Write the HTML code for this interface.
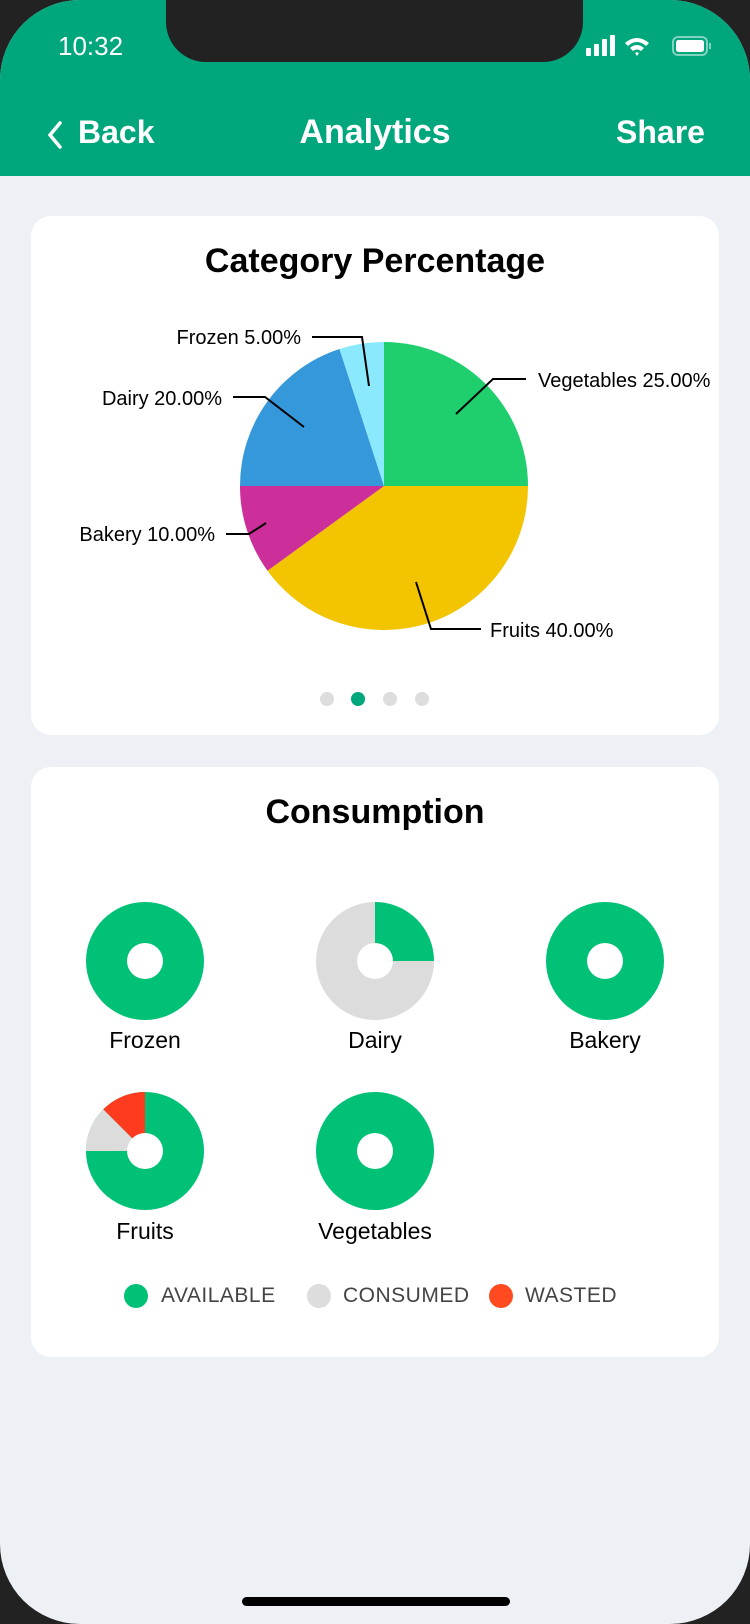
<!DOCTYPE html>
<html><head><meta charset="utf-8"><style>
*{margin:0;padding:0;box-sizing:border-box}
body{width:750px;height:1624px;background:#222;font-family:"Liberation Sans",sans-serif;overflow:hidden;position:relative}
.screen{position:absolute;left:0;top:0;width:750px;height:1624px;background:#edf0f5;border-radius:80px 80px 80px 80px;overflow:hidden}
.hdr{position:absolute;left:0;top:0;width:750px;height:176px;background:#00a67c}
.notch{position:absolute;left:166px;top:0;width:417px;height:62px;background:#222;border-radius:0 0 40px 40px}
.w{color:#fff;position:absolute}
.card{position:absolute;left:31px;width:688px;background:#fff;border-radius:20px}
.t{position:absolute;text-align:center;width:100%;font-weight:bold;font-size:34px;color:#000}
.lab{position:absolute;font-size:23px;color:#000;text-align:center;width:200px}
.lg{position:absolute;top:1284px;font-size:21px;color:#444;letter-spacing:0.5px}
.dot{position:absolute;width:24px;height:24px;border-radius:12px;top:1284px}
</style></head><body>
<div class="screen">
<div class="hdr"></div>
<div class="notch"></div>
<div class="w" style="left:58px;top:31px;font-size:26px">10:32</div>
<svg style="position:absolute;left:585px;top:34px" width="135" height="26" viewBox="0 0 135 26">
<rect x="1" y="14" width="5" height="8" rx="1" fill="#fff"/><rect x="9" y="10" width="5" height="12" rx="1" fill="#fff"/><rect x="17" y="5" width="5" height="17" rx="1" fill="#fff"/><rect x="25" y="1" width="5" height="21" rx="1" fill="#fff"/>
<path d="M40 9 Q52 -1 64 9 L61 12 Q52 4 43 12Z M45 14 Q52 8 59 14 L56 17 Q52 14 48 17Z M50 19 L52 22 L54 19 Q52 17.5 50 19Z" fill="#fff"/>
<rect x="88" y="3" width="34" height="18" rx="5" fill="none" stroke="#fff" stroke-opacity=".5" stroke-width="2"/><rect x="91" y="6" width="28" height="12" rx="2.5" fill="#fff"/><rect x="124" y="9" width="2" height="6" fill="#fff" opacity=".5"/>
</svg>
<svg style="position:absolute;left:46px;top:120px" width="18" height="30"><path d="M14 3 L4 15 L14 27" stroke="#fff" stroke-width="3.5" fill="none" stroke-linecap="round"/></svg>
<div class="w" style="left:78px;top:114px;font-size:32px;font-weight:bold">Back</div>
<div class="w" style="left:0;width:750px;text-align:center;top:113px;font-size:34px;font-weight:bold">Analytics</div>
<div class="w" style="left:616px;top:114px;font-size:32px;font-weight:bold">Share</div>

<div class="card" style="top:216px;height:519px">
<div class="t" style="top:26px">Category Percentage</div>
</div>
<svg style="position:absolute;left:0;top:0" width="750" height="740">
<path d="M384 486 L384 342 A144 144 0 0 1 528 486Z" fill="#1fcf6e"/>
<path d="M384 486 L528 486 A144 144 0 0 1 267.5 570.7Z" fill="#f2c500"/>
<path d="M384 486 L267.5 570.7 A144 144 0 0 1 240 486Z" fill="#cc2f9a"/>
<path d="M384 486 L240 486 A144 144 0 0 1 339.5 349Z" fill="#3498db"/>
<path d="M384 486 L339.5 349 A144 144 0 0 1 384 342Z" fill="#8be9fd"/>
<g stroke="#000" stroke-width="2" fill="none">
<polyline points="456,414 493,379 526,379"/>
<polyline points="416,582 431,629 481,629"/>
<polyline points="266,523 249,534 226,534"/>
<polyline points="304,427 265,397 233,397"/>
<polyline points="369,386 362,337 312,337"/>
</g>
<g font-family="Liberation Sans" font-size="20" fill="#000">
<text x="538" y="387">Vegetables 25.00%</text>
<text x="490" y="637">Fruits 40.00%</text>
<text x="215" y="541" text-anchor="end">Bakery 10.00%</text>
<text x="222" y="405" text-anchor="end">Dairy 20.00%</text>
<text x="301" y="344" text-anchor="end">Frozen 5.00%</text>
</g>
<circle cx="327" cy="699" r="7" fill="#ddd"/><circle cx="358" cy="699" r="7" fill="#00a67c"/><circle cx="390" cy="699" r="7" fill="#ddd"/><circle cx="422" cy="699" r="7" fill="#ddd"/>
</svg>

<div class="card" style="top:767px;height:590px">
<div class="t" style="top:26px">Consumption</div>
</div>
<svg style="position:absolute;left:0;top:880px" width="750" height="340">
<g transform="translate(0,-880)">
<circle cx="145" cy="961" r="59" fill="#00c176"/><circle cx="145" cy="961" r="18" fill="#fff"/>
<circle cx="375" cy="961" r="59" fill="#dcdcdc"/><path d="M375 961 L375 902 A59 59 0 0 1 434 961Z" fill="#00c176"/><circle cx="375" cy="961" r="18" fill="#fff"/>
<circle cx="605" cy="961" r="59" fill="#00c176"/><circle cx="605" cy="961" r="18" fill="#fff"/>
<circle cx="145" cy="1151" r="59" fill="#00c176"/>
<path d="M145 1151 L86 1151 A59 59 0 0 1 103.3 1109.3Z" fill="#dcdcdc"/>
<path d="M145 1151 L103.3 1109.3 A59 59 0 0 1 145 1092Z" fill="#ff3b1f"/>
<circle cx="145" cy="1151" r="18" fill="#fff"/>
<circle cx="375" cy="1151" r="59" fill="#00c176"/><circle cx="375" cy="1151" r="18" fill="#fff"/>
</g></svg>
<div class="lab" style="left:45px;top:1027px">Frozen</div>
<div class="lab" style="left:275px;top:1027px">Dairy</div>
<div class="lab" style="left:505px;top:1027px">Bakery</div>
<div class="lab" style="left:45px;top:1218px">Fruits</div>
<div class="lab" style="left:275px;top:1218px">Vegetables</div>
<div class="dot" style="left:124px;background:#00c176"></div><div class="lg" style="left:161px">AVAILABLE</div>
<div class="dot" style="left:307px;background:#ddd"></div><div class="lg" style="left:343px">CONSUMED</div>
<div class="dot" style="left:489px;background:#ff4b1f"></div><div class="lg" style="left:525px">WASTED</div>
<div style="position:absolute;left:242px;top:1597px;width:268px;height:9px;border-radius:5px;background:#000"></div>
</div>
</body></html>
